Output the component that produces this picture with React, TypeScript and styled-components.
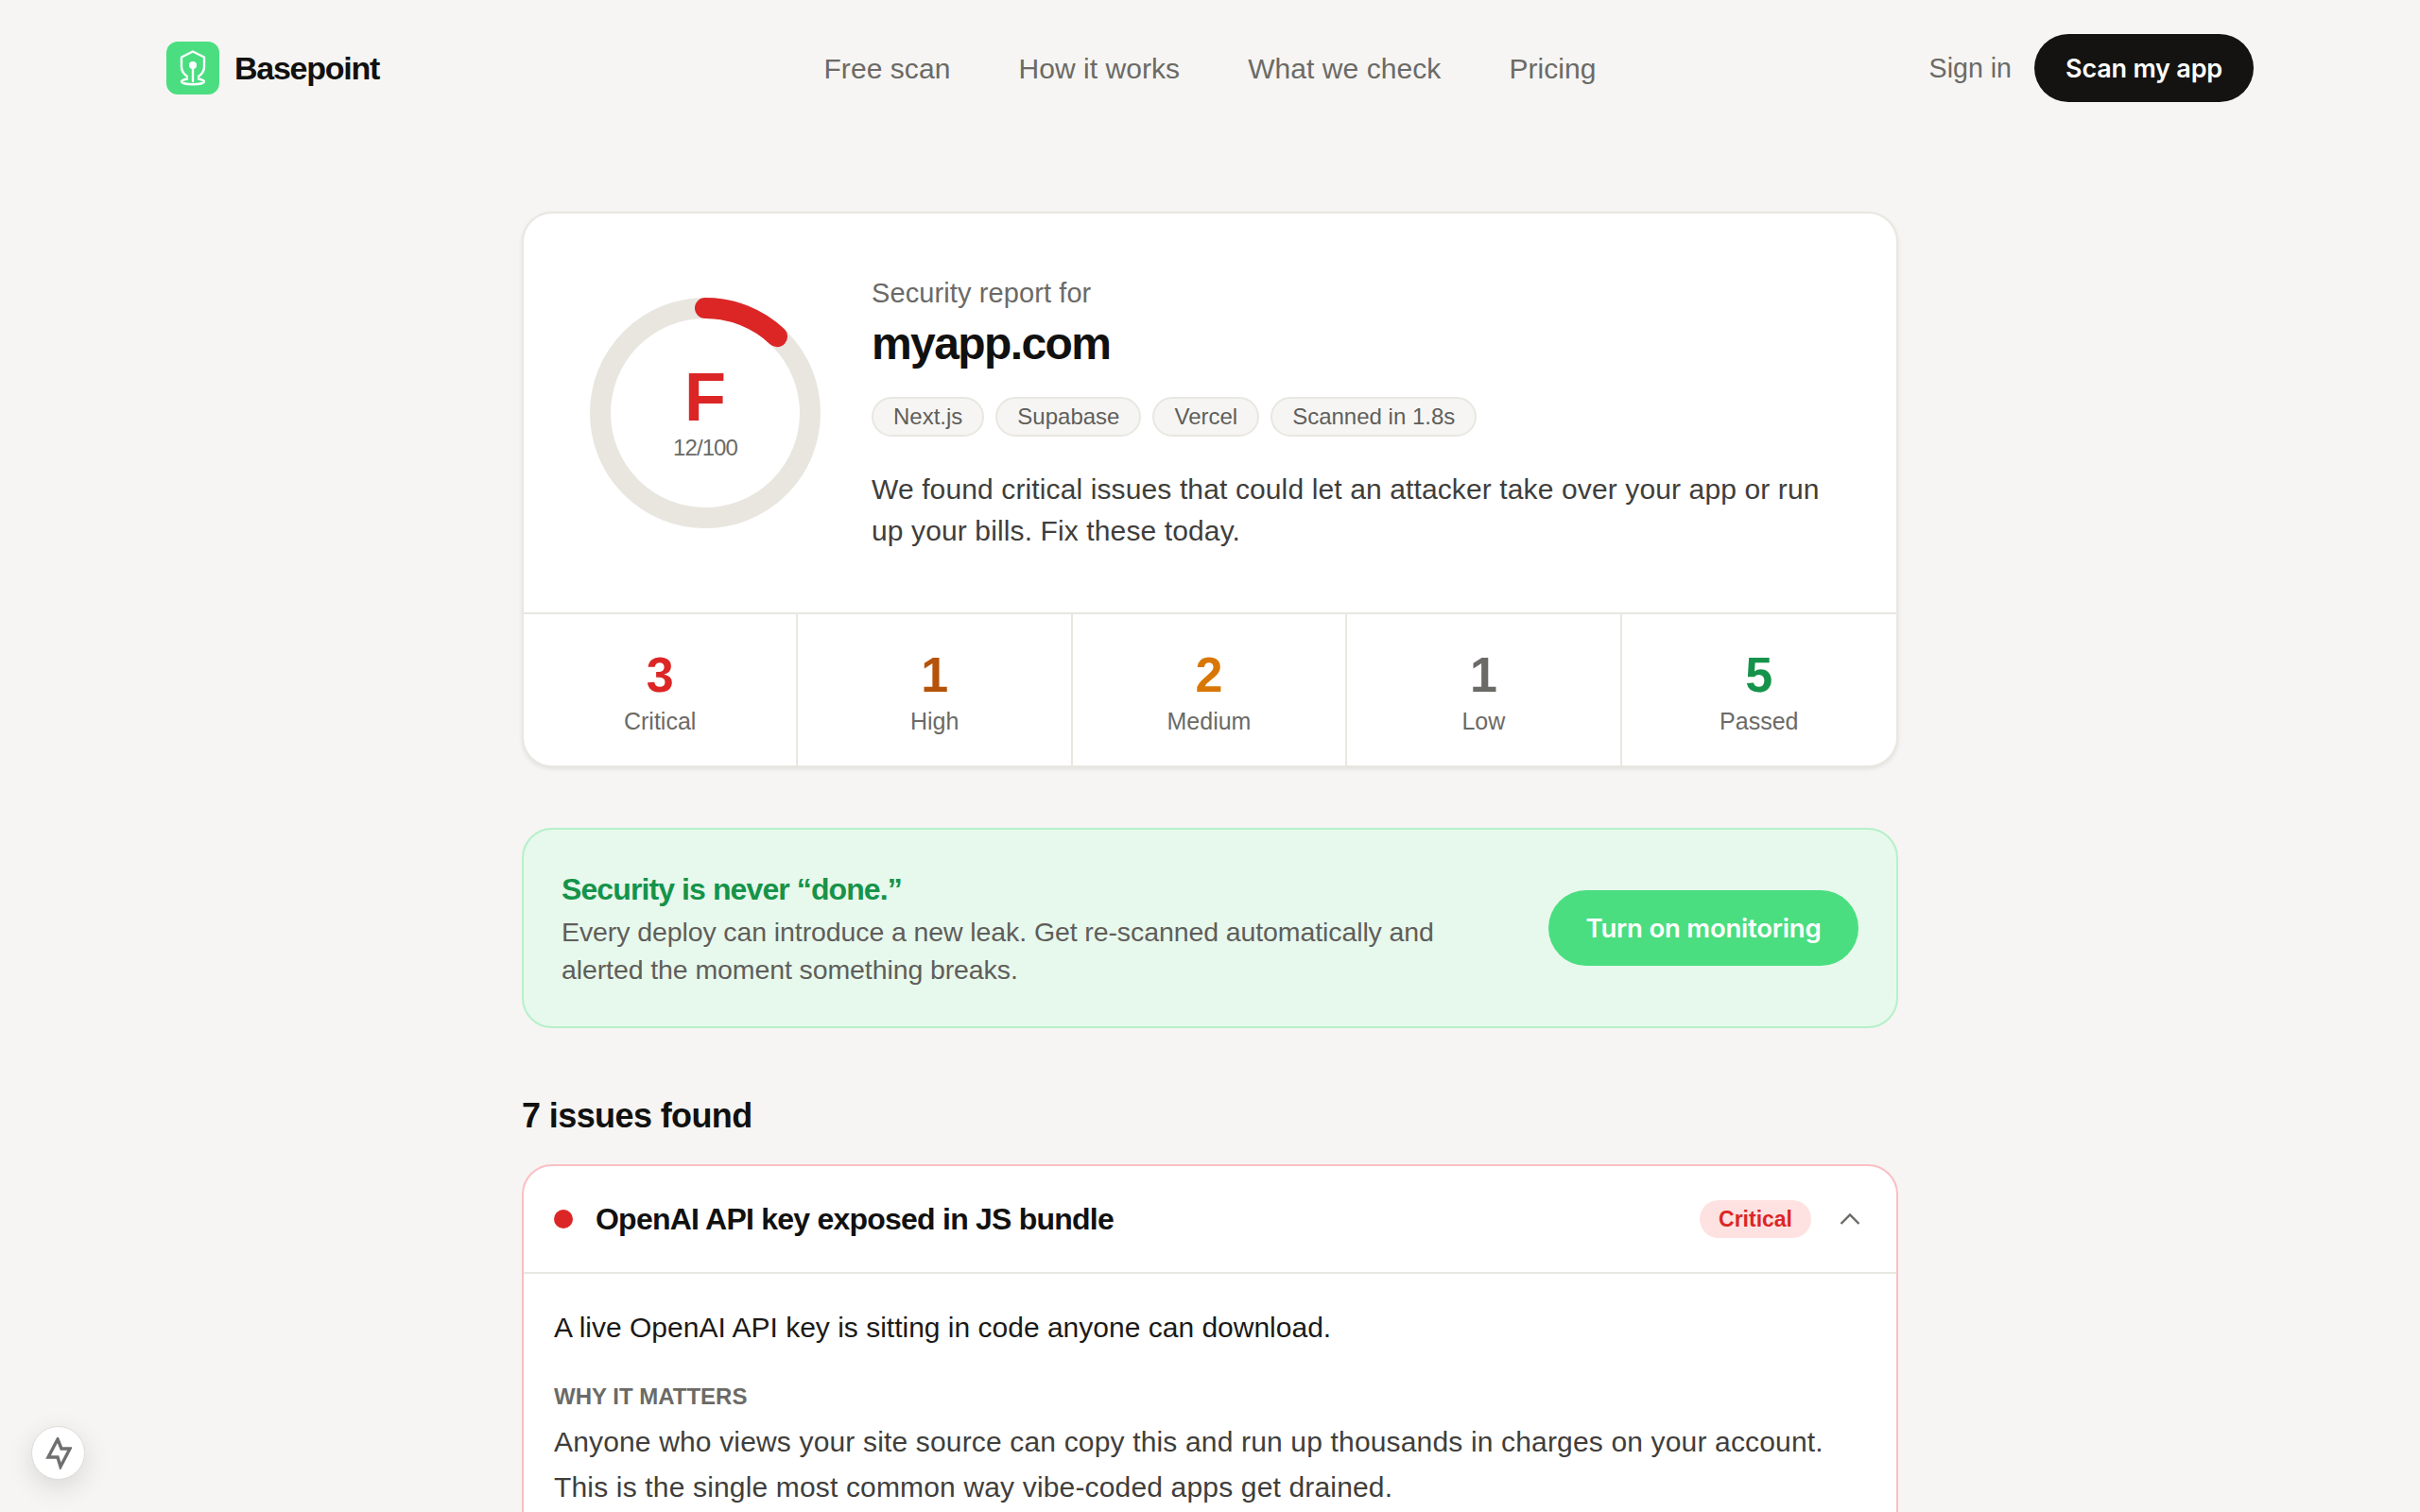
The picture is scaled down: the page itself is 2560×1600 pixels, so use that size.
import React from "react";
import styled, { createGlobalStyle } from "styled-components";

const GlobalStyle = createGlobalStyle`
  html, body {
    margin: 0;
    padding: 0;
    background: #f6f5f3;
    font-family: "Liberation Sans", Arial, sans-serif;
    color: #111110;
    height: 1600px;
    overflow: hidden;
  }
  * { box-sizing: border-box; }
`;

const Header = styled.header`
  display: grid;
  grid-template-columns: 1fr auto 1fr;
  align-items: center;
  height: 144px;
  padding: 0 176px;
`;

const Brand = styled.div`
  display: flex;
  align-items: center;
  gap: 16px;
  font-size: 34px;
  font-weight: 700;
  letter-spacing: -1.25px;
`;

const Nav = styled.nav`
  display: flex;
  gap: 72px;
  padding-top: 2px;
`;

const NavLink = styled.a`
  font-size: 30px;
  letter-spacing: 0.06px;
  color: #6b6a66;
`;

const HeaderActions = styled.div`
  display: flex;
  justify-content: flex-end;
  align-items: center;
  gap: 24px;
`;

const SignIn = styled.a`
  font-size: 28.6px;
  color: #6b6a66;
`;

const ScanButton = styled.button`
  height: 72px;
  width: 232px;
  border: 0;
  border-radius: 36px;
  background: #141311;
  color: #fff;
  font: 600 27px Inter, "Liberation Sans", sans-serif;
  letter-spacing: -0.2px;
`;

const Main = styled.main`
  width: 1456px;
  margin: 80px auto 0;
`;

const ReportCard = styled.section`
  background: #fff;
  border: 2px solid #e8e7e0;
  border-radius: 32px;
  box-shadow: 0 2px 4px rgba(60, 60, 40, 0.1);
  overflow: hidden;
`;

const ReportTop = styled.div`
  display: flex;
  align-items: center;
  gap: 54px;
  height: 422px;
  padding: 0 70px;
`;

const Ring = styled.div`
  display: grid;
  flex: none;
  width: 244px;
  height: 244px;
  place-items: center;
  & > * { grid-area: 1 / 1; }
`;

const GradeBlock = styled.div`
  display: flex;
  flex-direction: column;
  align-items: center;
`;

const Grade = styled.div`
  font-size: 72px;
  font-weight: 700;
  line-height: 72px;
  color: #dc2626;
`;

const Score = styled.div`
  margin-top: 2px;
  font-size: 24px;
  line-height: 32px;
  color: #6b6a66;
  letter-spacing: -0.9px;
`;

const ReportInfo = styled.div`
  display: flex;
  flex-direction: column;
  align-items: flex-start;
  padding-top: 2px;
`;

const Eyebrow = styled.div`
  font-size: 29px;
  line-height: 36px;
  letter-spacing: 0.1px;
  color: #6b6a66;
`;

const Domain = styled.h1`
  margin: 8px 0 0;
  font-size: 48px;
  line-height: 56px;
  font-weight: 700;
  letter-spacing: -1.6px;
`;

const Tags = styled.div`
  display: flex;
  gap: 12px;
  margin-top: 28px;
`;

const Tag = styled.span`
  height: 42px;
  padding: 0 21px;
  display: flex;
  align-items: center;
  border: 2px solid #e8e7e0;
  border-radius: 21px;
  background: #f6f5f3;
  font-size: 24px;
  color: #5f5e5a;
`;

const Summary = styled.p`
  margin: 34px 0 0;
  font-size: 30px;
  line-height: 44px;
  letter-spacing: 0.12px;
  color: #3f3e3b;
`;

const Stats = styled.div`
  display: grid;
  grid-template-columns: repeat(5, 1fr);
  border-top: 2px solid #e8e7e0;
`;

const Stat = styled.div`
  display: flex;
  flex-direction: column;
  align-items: center;
  height: 160px;
  padding-top: 36px;
  &:not(:last-child) { border-right: 2px solid #e8e7e0; }
`;

const StatValue = styled.div<{ $color: string }>`
  font-size: 52px;
  line-height: 56px;
  font-weight: 700;
  color: ${(p) => p.$color};
`;

const StatLabel = styled.div`
  margin-top: 5px;
  font-size: 25px;
  line-height: 32px;
  color: #6b6a66;
`;

const Banner = styled.section`
  display: flex;
  align-items: center;
  justify-content: space-between;
  margin-top: 64px;
  height: 212px;
  padding: 0 40px;
  background: #e7f8ec;
  border: 2px solid #b5f0c9;
  border-radius: 32px;
`;

const BannerCopy = styled.div`
  width: 940px;
`;

const BannerTitle = styled.div`
  font-size: 32px;
  line-height: 44px;
  font-weight: 700;
  letter-spacing: -0.9px;
  color: #15934a;
`;

const BannerText = styled.div`
  margin-top: 3px;
  font-size: 28.5px;
  line-height: 40px;
  letter-spacing: -0.1px;
  color: #5f5e5a;
`;

const MonitorButton = styled.button`
  width: 328px;
  height: 80px;
  border: 0;
  border-radius: 40px;
  background: #4ade80;
  color: #fff;
  font: 600 27.5px Inter, "Liberation Sans", sans-serif;
  letter-spacing: -0.2px;
`;

const IssuesHeading = styled.h2`
  margin: 69px 0 27px;
  font-size: 36px;
  line-height: 48px;
  font-weight: 700;
  letter-spacing: -0.6px;
`;

const IssueCard = styled.article`
  background: #fff;
  border: 2px solid #fbbfc4;
  border-radius: 32px;
  height: 700px;
`;

const IssueHeader = styled.div`
  display: flex;
  align-items: center;
  height: 114px;
  padding: 0 32px;
  border-bottom: 2px solid #e8e7e0;
`;

const Dot = styled.span`
  width: 20px;
  height: 20px;
  border-radius: 50%;
  background: #dc2626;
  margin-right: 24px;
`;

const IssueTitle = styled.div`
  flex: 1;
  font-size: 32px;
  font-weight: 700;
  letter-spacing: -0.77px;
`;

const Badge = styled.span`
  height: 40px;
  padding: 0 20px;
  display: flex;
  align-items: center;
  border-radius: 20px;
  background: #fee2e2;
  color: #dc2626;
  font-size: 23px;
  font-weight: 700;
`;

const Chevron = styled.svg`
  margin-left: 30px;
  margin-right: 6px;
`;

const IssueBody = styled.div`
  padding: 35px 32px 0;
`;

const Lead = styled.p`
  margin: 0;
  font-size: 30px;
  line-height: 44px;
  color: #1b1a18;
`;

const SectionLabel = styled.div`
  margin-top: 36px;
  font-size: 24px;
  line-height: 30px;
  font-weight: 700;
  color: #6b6a66;
`;

const BodyText = styled.p`
  margin: 9px 0 0;
  font-size: 30px;
  line-height: 48px;
  letter-spacing: 0.16px;
  color: #3f3e3b;
`;

const DevToolButton = styled.button`
  position: fixed;
  left: 33px;
  bottom: 34px;
  width: 57px;
  height: 57px;
  padding: 0;
  display: flex;
  align-items: center;
  justify-content: center;
  background: #fff;
  border: 1px solid #dcdbd8;
  border-radius: 50%;
  box-shadow: 0 8px 28px rgba(0, 0, 0, 0.12);
`;

const stats = [
  { value: 3, label: "Critical", color: "#dc2626" },
  { value: 1, label: "High", color: "#b45309" },
  { value: 2, label: "Medium", color: "#d97706" },
  { value: 1, label: "Low", color: "#6b6a66" },
  { value: 5, label: "Passed", color: "#15934a" },
];

const navItems = ["Free scan", "How it works", "What we check", "Pricing"];
const tags = ["Next.js", "Supabase", "Vercel", "Scanned in 1.8s"];

const LogoMark = () => (
  <svg width="56" height="56" viewBox="0 0 56 56" aria-hidden="true">
    <rect width="56" height="56" rx="12" fill="#4ade80" />
    <g fill="none" stroke="#fff" strokeWidth="2.4" strokeLinecap="round" strokeLinejoin="round">
      <path d="M22 37c-4-3-6-6-6-10V16.500l12-6 12 6V27c0 4-2 7-6 10" />
      <path d="M22 39.500c-3 .6-6 1.500-6 2.700 0 1.700 5.500 3 12 3s12-1.300 12-3c0-1.200-3-2.100-6-2.700" />
      <path d="M28 29v13" />
    </g>
    <circle cx="28" cy="25" r="4" fill="#fff" />
  </svg>
);

const ScoreRing = () => {
  const r = 111;
  const circumference = 2 * Math.PI * r;
  return (
    <svg width="244" height="244" viewBox="0 0 244 244" aria-hidden="true">
      <circle cx="122" cy="122" r={r} fill="none" stroke="#e8e6df" strokeWidth="22" />
      <circle
        cx="122"
        cy="122"
        r={r}
        fill="none"
        stroke="#dc2626"
        strokeWidth="22"
        strokeLinecap="round"
        strokeDasharray={`${circumference * 0.12} ${circumference}`}
        transform="rotate(-90 122 122)"
      />
    </svg>
  );
};

export default function App() {
  return (
    <>
      <GlobalStyle />
      <Header>
        <Brand>
          <LogoMark />
          Basepoint
        </Brand>
        <Nav>
          {navItems.map((item) => (
            <NavLink key={item}>{item}</NavLink>
          ))}
        </Nav>
        <HeaderActions>
          <SignIn>Sign in</SignIn>
          <ScanButton>Scan my app</ScanButton>
        </HeaderActions>
      </Header>
      <Main>
        <ReportCard>
          <ReportTop>
            <Ring>
              <ScoreRing />
              <GradeBlock>
                <Grade>F</Grade>
                <Score>12/100</Score>
              </GradeBlock>
            </Ring>
            <ReportInfo>
              <Eyebrow>Security report for</Eyebrow>
              <Domain>myapp.com</Domain>
              <Tags>
                {tags.map((tag) => (
                  <Tag key={tag}>{tag}</Tag>
                ))}
              </Tags>
              <Summary>
                We found critical issues that could let an attacker take over your app or run
                <br />
                up your bills. Fix these today.
              </Summary>
            </ReportInfo>
          </ReportTop>
          <Stats>
            {stats.map((stat) => (
              <Stat key={stat.label}>
                <StatValue $color={stat.color}>{stat.value}</StatValue>
                <StatLabel>{stat.label}</StatLabel>
              </Stat>
            ))}
          </Stats>
        </ReportCard>
        <Banner>
          <BannerCopy>
            <BannerTitle>Security is never “done.”</BannerTitle>
            <BannerText>
              Every deploy can introduce a new leak. Get re-scanned automatically and
              <br />
              alerted the moment something breaks.
            </BannerText>
          </BannerCopy>
          <MonitorButton>Turn on monitoring</MonitorButton>
        </Banner>
        <IssuesHeading>7 issues found</IssuesHeading>
        <IssueCard>
          <IssueHeader>
            <Dot />
            <IssueTitle>OpenAI API key exposed in JS bundle</IssueTitle>
            <Badge>Critical</Badge>
            <Chevron width="22" height="14" viewBox="0 0 22 14" fill="none" stroke="#6b6a66" strokeWidth="2.4">
              <path d="M1.500 12 11 2.500 20.500 12" />
            </Chevron>
          </IssueHeader>
          <IssueBody>
            <Lead>A live OpenAI API key is sitting in code anyone can download.</Lead>
            <SectionLabel>WHY IT MATTERS</SectionLabel>
            <BodyText>
              Anyone who views your site source can copy this and run up thousands in charges on your account.
              <br />
              This is the single most common way vibe-coded apps get drained.
            </BodyText>
          </IssueBody>
        </IssueCard>
      </Main>
      <DevToolButton aria-label="Open dev tools">
        <svg width="28" height="34" viewBox="0 0 28 34" fill="none" stroke="#6f6f6f" strokeWidth="3.4" strokeLinejoin="miter">
          <path d="M13 2 3 21h10l3 10 10-19h-9z" />
        </svg>
      </DevToolButton>
    </>
  );
}
